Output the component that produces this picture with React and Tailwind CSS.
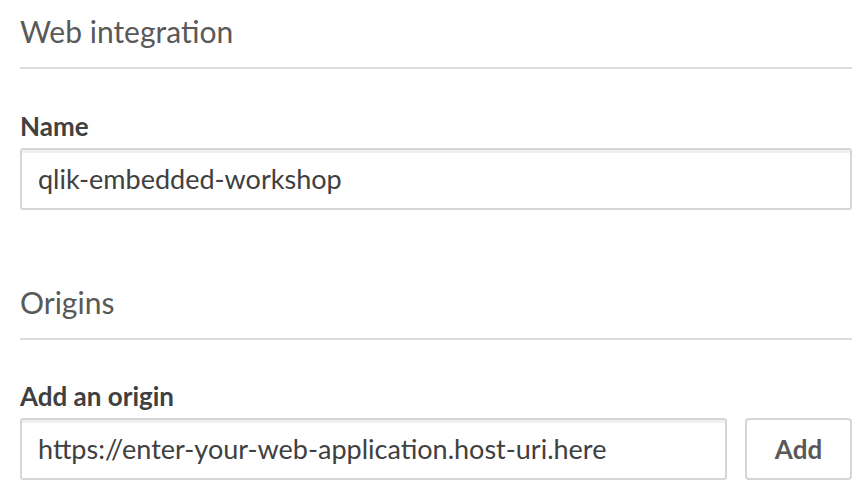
export default function App() {
  return (
    <div className="w-[864px] h-[490px] bg-white overflow-hidden font-['Lato',sans-serif]">
      <div className="pl-[20px] pr-[12px]">
        <h2 className="pt-[11px] pb-[16px] text-[30px] leading-[40px] text-[#595959] border-b-2 border-[#dcdcdc]">
          Web integration
        </h2>

        <label className="block mt-[41px] text-[26px] leading-[32px] font-bold text-[#404040]">
          Name
        </label>
        <div className="mt-[6px] h-[62px] rounded-[3px] border-2 border-[#d6d6d6] shadow-[inset_0_3px_0_#f0f0f0] flex items-center px-[16px] text-[27px] text-[#404040]">
          qlik-embedded-workshop
        </div>

        <h2 className="mt-[72px] pb-[16px] text-[30px] leading-[40px] text-[#595959] border-b-2 border-[#dcdcdc]">
          Origins
        </h2>

        <label className="block mt-[40px] text-[26px] leading-[32px] font-bold text-[#404040]">
          Add an origin
        </label>
        <div className="mt-[6px] flex gap-[18px]">
          <div className="flex-1 h-[62px] rounded-[3px] border-2 border-[#d6d6d6] shadow-[inset_0_3px_0_#f0f0f0] flex items-center px-[16px] text-[27px] text-[#404040]">
            https://enter-your-web-application.host-uri.here
          </div>
          <button className="w-[107px] h-[62px] rounded-[4px] border-2 border-[#d6d6d6] bg-white text-[26px] font-bold text-[#595959]">
            Add
          </button>
        </div>
      </div>
    </div>
  );
}
